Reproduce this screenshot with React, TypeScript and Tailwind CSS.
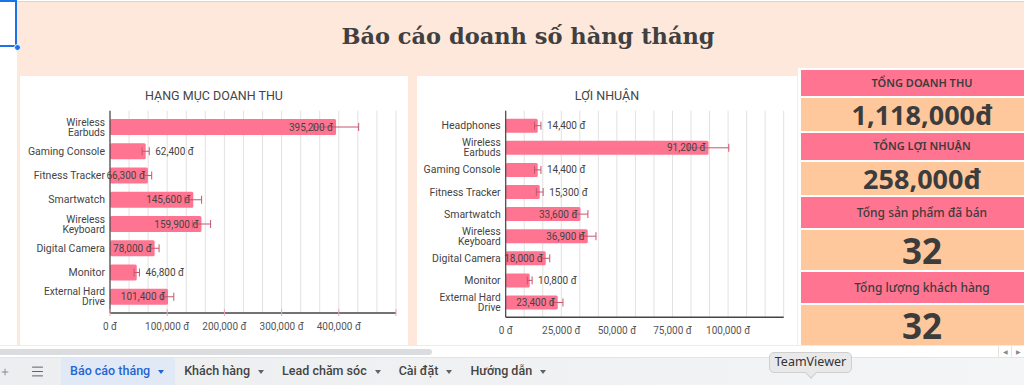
import React from 'react';
import { Plus, Menu } from 'lucide-react';

type Row = { name: string[]; v: number; inside: boolean };

const revenue: Row[] = [
  { name: ['Wireless', 'Earbuds'], v: 395200, inside: true },
  { name: ['Gaming Console'], v: 62400, inside: false },
  { name: ['Fitness Tracker'], v: 66300, inside: true },
  { name: ['Smartwatch'], v: 145600, inside: true },
  { name: ['Wireless', 'Keyboard'], v: 159900, inside: true },
  { name: ['Digital Camera'], v: 78000, inside: true },
  { name: ['Monitor'], v: 46800, inside: false },
  { name: ['External Hard', 'Drive'], v: 101400, inside: true },
];

const profit: Row[] = [
  { name: ['Headphones'], v: 14400, inside: false },
  { name: ['Wireless', 'Earbuds'], v: 91200, inside: true },
  { name: ['Gaming Console'], v: 14400, inside: false },
  { name: ['Fitness Tracker'], v: 15300, inside: false },
  { name: ['Smartwatch'], v: 33600, inside: true },
  { name: ['Wireless', 'Keyboard'], v: 36900, inside: true },
  { name: ['Digital Camera'], v: 18000, inside: true },
  { name: ['Monitor'], v: 10800, inside: false },
  { name: ['External Hard', 'Drive'], v: 23400, inside: true },
];

const fmt = (n: number) => n.toLocaleString('en-US') + ' đ';

type ChartProps = {
  title: string;
  box: [number, number, number, number];
  x0: number;
  plotW: number;
  max: number;
  top: number;
  axisY: number;
  c0: number;
  pitch: number;
  barH: number;
  labelX: number;
  ticks: number[];
  pinkTicks: boolean;
  rows: Row[];
};

const BarChart: React.FC<ChartProps> = ({ title, box, x0, plotW, max, top, axisY, c0, pitch, barH, labelX, ticks, pinkTicks, rows }) => {
  const [bx, by, bw, bh] = box;
  const sx = (v: number) => x0 + (v / max) * plotW;
  const grid = Array.from({ length: 16 }, (_, k) => x0 + (k * plotW) / 15);
  return (
    <svg width={bw} height={bh} viewBox={`${bx} ${by} ${bw} ${bh}`} className="block" style={{ fontFamily: 'Roboto, sans-serif' }}>
      <text x={bx + bw / 2} y={95} fontSize={12.5} fill="#444" textAnchor="middle" dominantBaseline="central">
        {title}
      </text>
      {grid.map((gx, i) => (
        <line key={i} x1={gx} x2={gx} y1={top} y2={axisY} stroke="#e2e2e2" strokeWidth={1} />
      ))}
      {rows.map((r, i) => {
        const c = c0 + i * pitch;
        const end = sx(r.v);
        const e1 = sx(r.v * 0.9);
        const e2 = sx(r.v * 1.1);
        return (
          <g key={i}>
            <rect x={x0} y={c - barH / 2} width={end - x0} height={barH} rx={1.5} fill="#ff7591" />
            <line x1={e1} x2={e2} y1={c} y2={c} stroke="#c4566e" strokeWidth={1} />
            <line x1={e1} x2={e1} y1={c - 4} y2={c + 4} stroke="#c4566e" strokeWidth={1} />
            <line x1={e2} x2={e2} y1={c - 4} y2={c + 4} stroke="#c4566e" strokeWidth={1} />
            <text
              x={r.inside ? end - 3 : e2 + 6}
              y={c}
              fontSize={10}
              fill="#444"
              textAnchor={r.inside ? 'end' : 'start'}
              dominantBaseline="central"
            >
              {fmt(r.v)}
            </text>
            {r.name.length === 1 ? (
              <text x={labelX} y={c} fontSize={10.5} fill="#444" textAnchor="end" dominantBaseline="central">
                {r.name[0]}
              </text>
            ) : (
              <>
                <text x={labelX} y={c - 5} fontSize={10.2} fill="#444" textAnchor="end" dominantBaseline="central">
                  {r.name[0]}
                </text>
                <text x={labelX} y={c + 5} fontSize={10.2} fill="#444" textAnchor="end" dominantBaseline="central">
                  {r.name[1]}
                </text>
              </>
            )}
          </g>
        );
      })}
      <line x1={x0} x2={x0} y1={top} y2={axisY} stroke="#444" strokeWidth={1.2} />
      <line x1={x0} x2={x0 + plotW} y1={axisY} y2={axisY} stroke="#444" strokeWidth={1.4} />
      {pinkTicks &&
        [0, 1, 2, 3, 4, 5].map((k) => (
          <line key={k} x1={x0 + (k * plotW) / 5} x2={x0 + (k * plotW) / 5} y1={axisY - 4} y2={axisY + 3} stroke="#f6a2b4" strokeWidth={1} />
        ))}
      {ticks.map((t) => (
        <text key={t} x={sx(t)} y={axisY + 13.5} fontSize={10} fill="#555" textAnchor="middle" dominantBaseline="central">
          {fmt(t)}
        </text>
      ))}
    </svg>
  );
};

const tabs = ['Báo cáo tháng', 'Khách hàng', 'Lead chăm sóc', 'Cài đặt', 'Hướng dẫn'];

export default function App() {
  return (
    <div className="relative w-[1024px] h-[385px] overflow-hidden bg-white font-['Roboto',sans-serif]">
      {/* header strip */}
      <div className="h-[2px] border-b border-[#d6d6d6] bg-white" />

      {/* sheet area */}
      <div className="flex h-[343px]">
        <div className="w-[17px] bg-white" />
        <div className="flex-1 flex flex-col overflow-hidden bg-[#fde8db]">
          <div className="h-[66px] flex items-center justify-center pl-[15px] pt-[2px]">
            <h1 className="font-['DejaVu_Serif',serif] font-bold text-[22.5px] text-[#404040] leading-none">
              Báo cáo doanh số hàng tháng
            </h1>
          </div>
          <div className="flex items-start pl-[3px]">
            <div className="mt-[8px] w-[388px] h-[269px] bg-white">
              <BarChart
                title="HẠNG MỤC DOANH THU"
                box={[20, 76, 388, 269]}
                x0={110}
                plotW={286}
                max={500000}
                top={110.7}
                axisY={313}
                c0={127}
                pitch={24.25}
                barH={16}
                labelX={105}
                ticks={[0, 100000, 200000, 300000, 400000]}
                pinkTicks
                rows={revenue}
              />
            </div>
            <div className="ml-[9px] mt-[8px] w-[380px] h-[269px] bg-white">
              <BarChart
                title="LỢI NHUẬN"
                box={[417, 76, 380, 269]}
                x0={505.7}
                plotW={278}
                max={125000}
                top={110.7}
                axisY={317.3}
                c0={125.7}
                pitch={22.1}
                barH={14}
                labelX={500.7}
                ticks={[0, 25000, 50000, 75000, 100000]}
                pinkTicks={false}
                rows={profit}
              />
            </div>
            <div className="ml-[1px] w-[226px] overflow-hidden bg-white pl-[3px] pt-[2px] font-['Noto_Sans',sans-serif] text-[#3c3c3c]">
              <div className="w-[242px] flex flex-col gap-[2px]">
                <div className="h-[26px] bg-[#ff7591] flex items-center justify-center text-[11px] font-semibold">TỔNG DOANH THU</div>
                <div className="h-[33px] bg-[#fec89c] flex items-center justify-center text-[27px] font-bold leading-none">1,118,000đ</div>
                <div className="h-[27px] bg-[#ff7591] flex items-center justify-center text-[11px] font-semibold">TỔNG LỢI NHUẬN</div>
                <div className="h-[33px] bg-[#fec89c] flex items-center justify-center text-[27px] font-bold leading-none">258,000đ</div>
                <div className="h-[31px] bg-[#ff7591] flex items-center justify-center text-[12px] font-medium">Tổng sản phẩm đã bán</div>
                <div className="h-[40px] bg-[#fec89c] flex items-center justify-center text-[35px] font-bold leading-none">32</div>
                <div className="h-[31px] bg-[#ff7591] flex items-center justify-center text-[12px] font-medium">Tổng lượng khách hàng</div>
                <div className="h-[40px] bg-[#fec89c] flex items-center justify-center text-[35px] font-bold leading-none">32</div>
              </div>
            </div>
          </div>
        </div>
      </div>

      {/* horizontal scrollbar */}
      <div className="h-[12px] flex items-center border-t border-[#ececec] bg-white">
        <div className="w-[432px] h-[6px] rounded-r-full bg-[#dadce0]" />
        <div className="ml-auto flex h-full">
          <div className="w-[13px] border-l border-[#e4e4e4] flex items-center justify-center text-[6px] text-[#888]">◀</div>
          <div className="w-[13px] border-l border-[#e4e4e4] flex items-center justify-center text-[6px] text-[#888]">▶</div>
        </div>
      </div>

      {/* sheet tabs */}
      <div className="h-[28px] flex items-center border-t border-[#e3e4e6] bg-gradient-to-r from-[#eceef0] via-[#f0f1f3] to-[#f4f5f7]">
        <div className="w-[10px] flex justify-center text-[#5f6368]">
          <Plus size={12} strokeWidth={1.6} />
        </div>
        <div className="ml-[19px] w-[16px] flex justify-center text-[#5f6368]">
          <Menu size={15} strokeWidth={1.6} />
        </div>
        <div className="ml-[16px] flex h-full">
          {tabs.map((t, i) => {
            const active = i === 0;
            return (
              <div
                key={t}
                className={`h-full flex items-center pl-[9px] gap-[8px] text-[12.5px] font-medium ${
                  active ? 'bg-[#e1e9f7] text-[#1f66d1] pr-[11px]' : 'text-[#444] pr-[9px]'
                }`}
              >
                <span>{t}</span>
                <span
                  className={`w-0 h-0 border-l-[3.5px] border-r-[3.5px] border-t-[4px] border-l-transparent border-r-transparent ${
                    active ? 'border-t-[#1f66d1]' : 'border-t-[#5f6368]'
                  }`}
                />
              </div>
            );
          })}
        </div>
      </div>

      {/* cell selection overlay */}
      <div className="absolute left-[-2px] top-0 w-[19px] h-[47px] border-2 border-[#1a73e8]" />
      <div className="absolute left-[14px] top-[44px] w-[7px] h-[7px] rounded-full bg-[#1a73e8] border border-white" />

      {/* TeamViewer tooltip */}
      <div className="absolute left-[769px] top-[352px] w-[83px] h-[21px] rounded-[5px] border border-[#cfcfcf] bg-[#e9e9ea] flex items-center justify-center text-[12.5px] text-[#333] font-['Noto_Sans',sans-serif]">
        TeamViewer
        <div className="absolute left-[37px] bottom-[-5px] w-[8px] h-[8px] rotate-45 bg-[#e9e9ea] border-r border-b border-[#cfcfcf]" />
      </div>
    </div>
  );
}
